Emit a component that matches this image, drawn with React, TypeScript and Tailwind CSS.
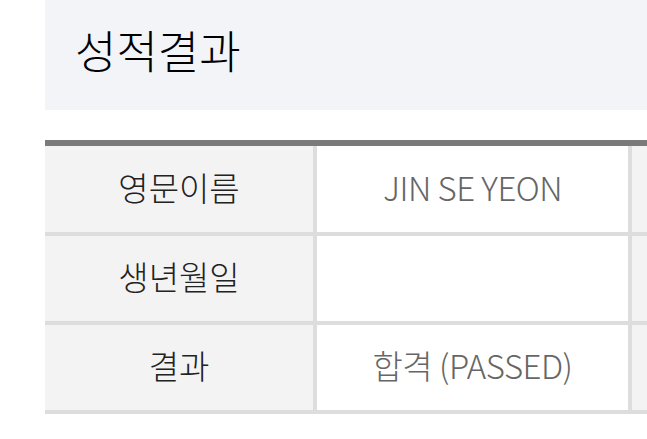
const rows = [
  { label: '영문이름', value: 'JIN SE YEON' },
  { label: '생년월일', value: '' },
  { label: '결과', value: '합격 (PASSED)' },
];

export default function App() {
  return (
    <div
      className="h-screen w-full overflow-hidden bg-white pl-[45px]"
      style={{ fontFamily: '"Noto Sans CJK KR", "Noto Sans", sans-serif' }}
    >
      {/* Title */}
      <div className="flex h-[110px] items-center bg-[#f3f4f8] pb-[12px] pl-[30px]">
        <h1 className="text-[45px] font-light leading-none text-black">성적결과</h1>
      </div>

      {/* Result table */}
      <div className="mt-[30px] border-t-[6px] border-[#7a7a7a]">
        {rows.map((row, i) => (
          <div
            key={i}
            className={`grid grid-cols-[272px_315px_1fr] border-b-4 border-[#dddddd] ${i === 0 ? 'h-[90px]' : 'h-[89px]'}`}
          >
            <div className="flex items-center justify-center border-r-4 border-[#dddddd] bg-[#f4f3f4] pb-[4px] text-[33px] font-light leading-none text-[#222222]">
              {row.label}
            </div>
            <div className="flex items-center justify-center border-r-4 border-[#dddddd] bg-white pb-[4px] text-[33px] font-light leading-none tracking-[-0.5px] text-[#666666]">
              {row.value}
            </div>
            <div className="bg-[#f4f3f4]" />
          </div>
        ))}
      </div>
    </div>
  );
}
